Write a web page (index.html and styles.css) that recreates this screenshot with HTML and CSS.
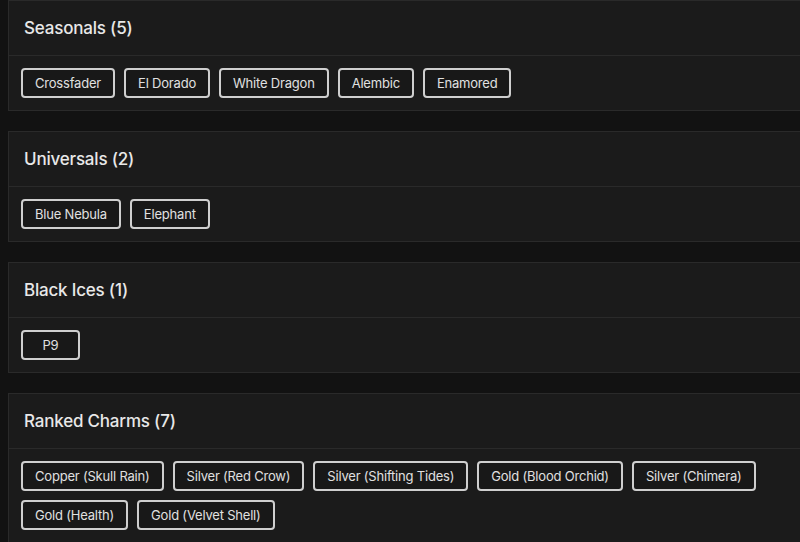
FILE: index.html
```html
<!DOCTYPE html>
<html>
<head>
    <title>Charms</title>
    <meta charset="UTF-8">
    <meta name="viewport" content="width=device-width, initial-scale=1.0">
    <link rel="stylesheet" href="styles.css">
</head>
<body>
  <div class="list">
    <div class="card">
      <div class="card-header"><h2>Seasonals (5)</h2></div>
      <div class="card-body">
        <button class="tag">Crossfader</button>
        <button class="tag">El Dorado</button>
        <button class="tag">White Dragon</button>
        <button class="tag">Alembic</button>
        <button class="tag">Enamored</button>
      </div>
    </div>

    <div class="card">
      <div class="card-header"><h2>Universals (2)</h2></div>
      <div class="card-body">
        <button class="tag">Blue Nebula</button>
        <button class="tag">Elephant</button>
      </div>
    </div>

    <div class="card">
      <div class="card-header"><h2>Black Ices (1)</h2></div>
      <div class="card-body">
        <button class="tag">P9</button>
      </div>
    </div>

    <div class="card">
      <div class="card-header"><h2>Ranked Charms (7)</h2></div>
      <div class="card-body">
        <button class="tag">Copper (Skull Rain)</button>
        <button class="tag">Silver (Red Crow)</button>
        <button class="tag">Silver (Shifting Tides)</button>
        <button class="tag">Gold (Blood Orchid)</button>
        <button class="tag">Silver (Chimera)</button>
        <button class="tag">Gold (Health)</button>
        <button class="tag">Gold (Velvet Shell)</button>
      </div>
    </div>
  </div>
</body>
</html>
```

FILE: styles.css
```css
body {
  font-family: Inter, "Noto Sans", sans-serif;
  margin: 0;
  padding: 0 0 0 8px;
  background-color: #121212;
  color: #e6e6e6;
  overflow: hidden;
}
.list {
  margin-right: -20px;
}
.card {
  background: #1b1b1b;
  border: 1px solid #2a2a2a;
  margin-bottom: 20px;
}
.card-header {
  height: 54px;
  padding: 0 15px;
  display: flex;
  align-items: center;
  border-bottom: 1px solid #2a2a2a;
}
.card-header h2 {
  margin: 0;
  font-size: 17px;
  line-height: 21px;
  font-weight: 500;
  letter-spacing: -0.2px;
  color: #e8e8e8;
}
.card-body {
  display: flex;
  flex-wrap: wrap;
  gap: 9px;
  padding: 12px;
}
.tag {
  height: 30px;
  min-width: 59px;
  font-family: inherit;
  font-size: 13px;
  line-height: 16px;
  letter-spacing: -0.2px;
  padding: 0 12px;
  background: #181818;
  color: #e0e0e0;
  border: 2px solid #cfcfcf;
  border-radius: 4px;
  cursor: pointer;
}
```
